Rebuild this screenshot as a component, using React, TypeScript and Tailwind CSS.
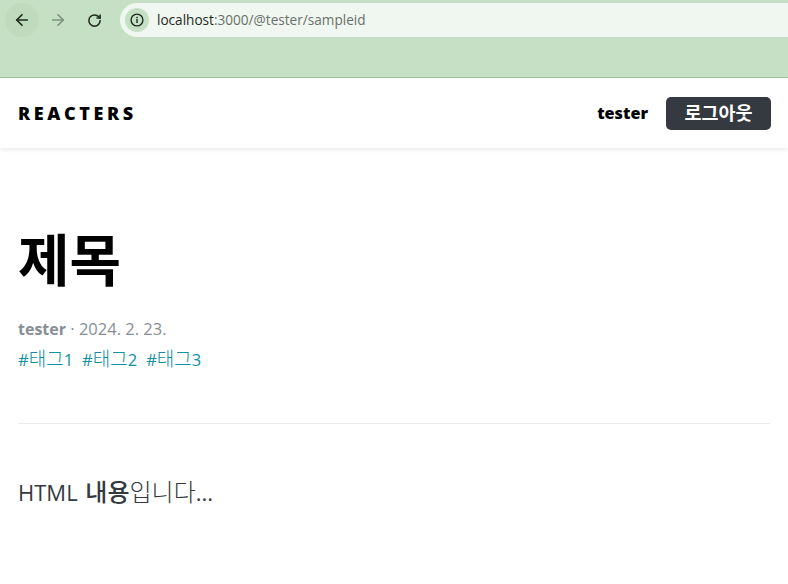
import { ArrowLeft, ArrowRight, RotateCw } from "lucide-react";

const font = "font-['Open_Sans','Noto_Sans_CJK_KR',sans-serif]";

const BrowserBar = () => (
  <div className="h-[78px] bg-[#c5e0c4] border-b border-[#a3bfa2] pt-[3px] pl-[5px] flex items-start font-['Open_Sans',sans-serif]">
    <div className="w-[34px] h-[34px] rounded-full bg-[#bfdbbe] flex justify-center items-center">
      <ArrowLeft size={18} strokeWidth={2.3} color="#1f2a1f" />
    </div>
    <div className="w-[36px] h-[34px] flex justify-center items-center ml-[1px]">
      <ArrowRight size={18} strokeWidth={2.3} color="#7f927f" />
    </div>
    <div className="w-[36px] h-[34px] flex justify-center items-center">
      <RotateCw size={15} strokeWidth={2.4} color="#1f2a1f" />
    </div>
    <div className="ml-[8px] flex-1 h-[34px] bg-[#f0f7f0] rounded-l-full flex items-center pl-[5px]">
      <div className="w-[24px] h-[24px] rounded-full bg-[#c5e0c4] flex justify-center items-center">
        <svg width="14" height="14" viewBox="0 0 14 14" fill="none">
          <circle cx="7" cy="7" r="5.9" stroke="#1f2a1f" strokeWidth="1.4" />
          <rect x="6.3" y="6" width="1.4" height="4" fill="#1f2a1f" />
          <rect x="6.3" y="3.8" width="1.4" height="1.4" fill="#1f2a1f" />
        </svg>
      </div>
      <p className="ml-[8px] text-[13.6px] text-[#6a706a]">
        <span className="text-[#1f2a1f]">localhost</span>:3000/@tester/sampleid
      </p>
    </div>
  </div>
);

const Header = () => (
  <div className="h-[70px] bg-white shadow-[0_2px_4px_rgba(0,0,0,0.08)] pl-[18px] pr-[17px] flex justify-between items-center relative">
    <div className="text-[18px] font-extrabold tracking-[3.6px] text-black">REACTERS</div>
    <div className="flex items-center">
      <span className="text-[16.2px] font-extrabold text-black">tester</span>
      <button
        type="button"
        className="ml-[18px] w-[105px] h-[33px] rounded-[5px] bg-[#343a40] text-white text-[18.5px] font-bold flex justify-center items-center font-['Noto_Sans_CJK_KR',sans-serif]"
      >
        로그아웃
      </button>
    </div>
  </div>
);

const Tag = ({ label, n }: any) => (
  <span>
    #<span className="text-[19px] font-light font-['Noto_Sans_CJK_KR',sans-serif]">{label}</span>
    {n}
  </span>
);

export default function App() {
  return (
    <div className={`min-h-[584px] bg-white ${font}`}>
      <BrowserBar />
      <Header />
      <div className="px-[18px] pt-[67px]">
        <h1 className="text-[56px] leading-[84px] font-bold text-black font-['Noto_Sans_CJK_KR',sans-serif] h-[84px]">제목</h1>
        <div className="mt-[18px] text-[16.5px] leading-[24px] text-[#868e96]">
          <b className="font-bold text-[16px]">tester</b> · 2024. 2. 23.
        </div>
        <div className="mt-[5px] flex gap-[9px] text-[16.5px] leading-[24px] text-[#0e8fa3]">
          <Tag label="태그" n="1" />
          <Tag label="태그" n="2" />
          <Tag label="태그" n="3" />
        </div>
        <hr className="mt-[51px] border-t border-[#e9ecef]" />
        <p className="mt-[50px] text-[22px] leading-[33px] text-[#343a40]">
          HTML{" "}
          <span className="ml-[2px] text-[24px] font-['Noto_Sans_CJK_KR',sans-serif]">
            <b className="font-medium">내용</b>
            <span className="font-light">입니다</span>
          </span>
          ...
        </p>
      </div>
    </div>
  );
}
